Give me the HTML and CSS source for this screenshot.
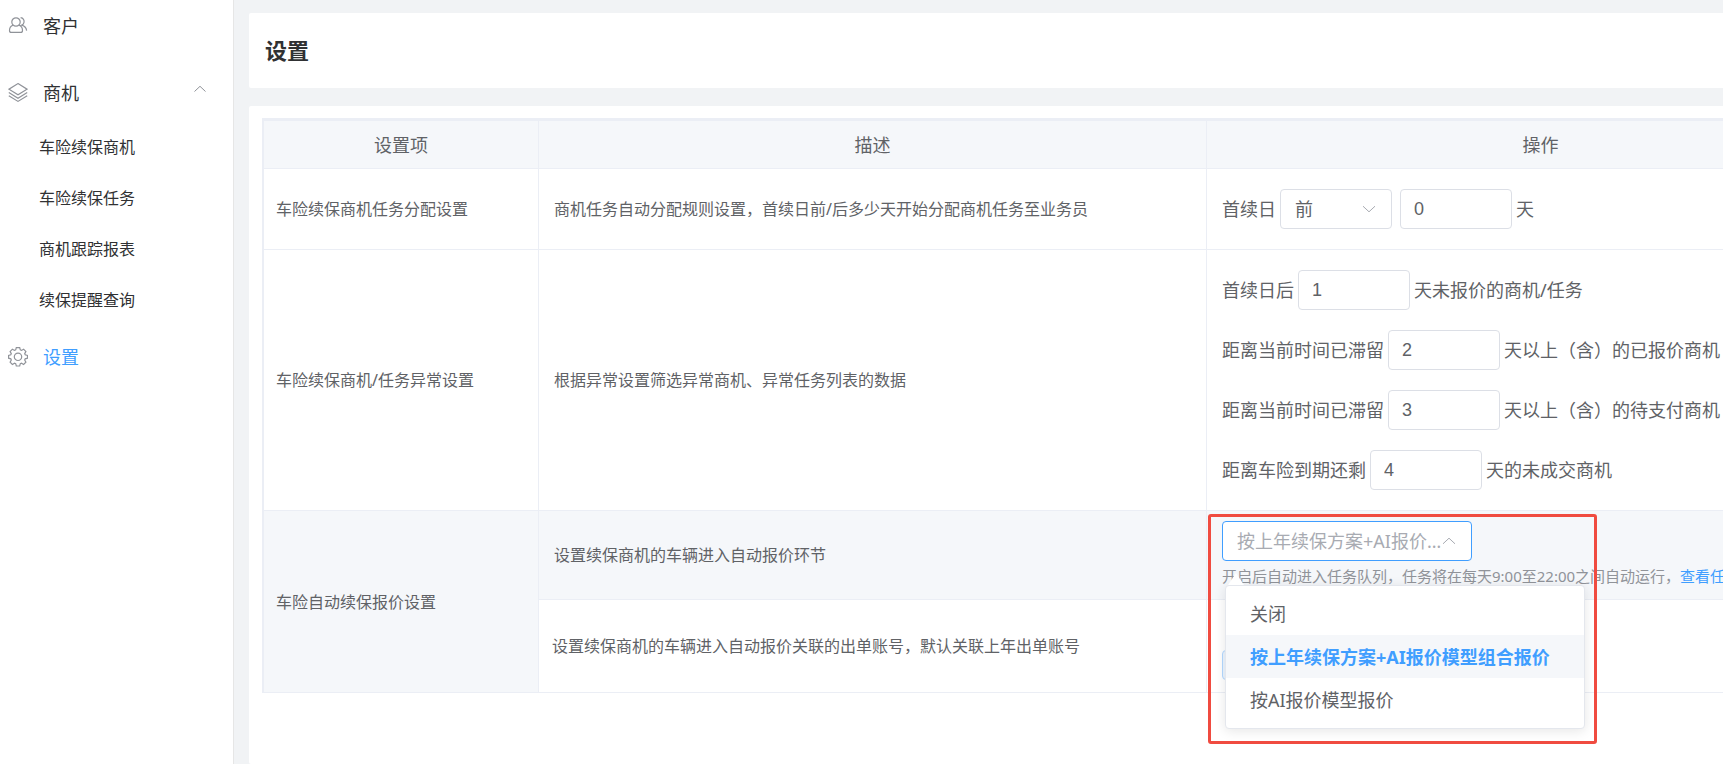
FILE: index.html
```html
<!DOCTYPE html>
<html lang="zh-CN">
<head>
<meta charset="utf-8">
<title>设置</title>
<link rel="stylesheet" href="styles.css">
</head>
<body>
<div class="app">
  <nav class="sidebar" aria-label="主菜单">
    <a class="menu-item" href="#">
      <svg class="menu-icon" viewBox="0 0 20 20"><circle cx="8" cy="6" r="4.2"/><path d="M5 9.200C2.500 10 1.500 12 1.500 14.400c0 1.300.5 2 1.800 2h9.400c1.300 0 1.800-.7 1.800-2 0-2.400-1-4.400-3.500-5.200M12.600 1.700c2.700.3 3.900 2.400 3.400 4.600-.3 1.400-1.100 2.300-2.200 2.800 2.800.9 4.600 2.900 4.800 5.500"/></svg>
      <span>客户</span>
    </a>
    <button class="menu-item menu-group" type="button" aria-expanded="true">
      <svg class="menu-icon" viewBox="0 0 20 20"><path d="M10 .6 19 6.200l-9 5.600L1 6.200zM.8 9.600 10 15.300l9.200-5.700M.8 12.700 10 18.400l9.200-5.700"/></svg>
      <span>商机</span>
      <svg class="menu-arrow" viewBox="0 0 14 8"><path d="M1.500 6.500 7 1.300l5.500 5.200"/></svg>
    </button>
    <div class="submenu">
      <a class="submenu-item" href="#">车险续保商机</a>
      <a class="submenu-item" href="#">车险续保任务</a>
      <a class="submenu-item" href="#">商机跟踪报表</a>
      <a class="submenu-item" href="#">续保提醒查询</a>
    </div>
    <a class="menu-item active" href="#" aria-current="page">
      <svg class="menu-icon" viewBox="0 0 20 20"><path d="M8.300.6h3.400l.6 2.300 1.200.5 2.100-1.200 2.300 2.300-1.200 2.100.5 1.200 2.300.6v2.800l-2.300.6-.5 1.200 1.200 2.100-2.300 2.300-2.100-1.200-1.200.5-.6 2.300H8.300l-.6-2.300-1.200-.5-2.100 1.200-2.300-2.300 1.200-2.100-.5-1.200L.6 11.200V8.400l2.200-.6.5-1.200-1.200-2.100 2.300-2.300 2.100 1.200 1.200-.5z"/><circle cx="10" cy="9.800" r="3.700"/></svg>
      <span>设置</span>
    </a>
  </nav>

  <main class="content">
    <header class="card page-header"><h1 class="page-title">设置</h1></header>
    <section class="card page-body">
      <table class="settings">
        <colgroup><col class="col-name"><col class="col-desc"><col class="col-action"></colgroup>
        <thead>
          <tr><th>设置项</th><th>描述</th><th>操作</th></tr>
        </thead>
        <tbody>
          <tr>
            <td class="name">车险续保商机任务分配设置</td>
            <td class="desc">商机任务自动分配规则设置，首续日前/后多少天开始分配商机任务至业务员</td>
            <td class="action">
              <div class="field">
                <label for="direction">首续日</label>
                <span class="select-box select-small">
                  <select class="control" id="direction"><option>前</option><option>后</option></select>
                  <svg class="caret" viewBox="0 0 14 8"><path d="M1 1.200 7 6.800l6-5.600"/></svg>
                </span>
                <input class="control number spaced" type="text" value="0" aria-label="天数">
                <span>天</span>
              </div>
            </td>
          </tr>
          <tr>
            <td class="name">车险续保商机/任务异常设置</td>
            <td class="desc">根据异常设置筛选异常商机、异常任务列表的数据</td>
            <td class="action">
              <div class="fields">
                <div class="field"><label for="d1">首续日后</label><input class="control number" id="d1" type="text" value="1"><span>天未报价的商机/任务</span></div>
                <div class="field"><label for="d2">距离当前时间已滞留</label><input class="control number" id="d2" type="text" value="2"><span>天以上（含）的已报价商机</span></div>
                <div class="field"><label for="d3">距离当前时间已滞留</label><input class="control number" id="d3" type="text" value="3"><span>天以上（含）的待支付商机</span></div>
                <div class="field"><label for="d4">距离车险到期还剩</label><input class="control number" id="d4" type="text" value="4"><span>天的未成交商机</span></div>
              </div>
            </td>
          </tr>
          <tr class="row-quote">
            <td class="name shaded" rowspan="2">车险自动续保报价设置</td>
            <td class="desc shaded">设置续保商机的车辆进入自动报价环节</td>
            <td class="action compact shaded">
              <div class="quote">
                <span class="select-box select-wide">
                  <select class="control focused" aria-label="报价方式">
                    <option>关闭</option>
                    <option selected>按上年续保方案+AI报价模型组合报价</option>
                    <option>按AI报价模型报价</option>
                  </select>
                  <svg class="caret" viewBox="0 0 14 8"><path d="M1 6.800 7 1.200l6 5.600"/></svg>
                </span>
                <p class="hint">开启后自动进入任务队列，任务将在每天9:00至22:00之间自动运行，<a class="link" href="#">查看任</a></p>
                <div class="dropdown" role="listbox" aria-label="报价方式">
                  <button class="option" type="button" role="option">关闭</button>
                  <button class="option selected" type="button" role="option" aria-selected="true">按上年续保方案+AI报价模型组合报价</button>
                  <button class="option" type="button" role="option">按AI报价模型报价</button>
                </div>
                <div class="highlight"></div>
              </div>
            </td>
          </tr>
          <tr class="row-account">
            <td class="desc desc-account">设置续保商机的车辆进入自动报价关联的出单账号，默认关联上年出单账号</td>
            <td class="action compact"><button class="account" type="button" aria-label="出单账号"></button></td>
          </tr>
        </tbody>
      </table>
    </section>
  </main>
</div>
</body>
</html>
```
FILE: styles.css
```css
* { box-sizing: border-box; }

body {
  margin: 0;
  background: #f1f3f5;
  color: #606266;
  font-family: "Noto Sans", "Noto Sans CJK SC", sans-serif;
  font-size: 18px;
  line-height: 24px;
}

button, select, input { font: inherit; color: inherit; }
svg { fill: none; stroke: #909399; }

.app { display: flex; min-height: 100vh; overflow: hidden; }

.sidebar {
  flex: 0 0 234px;
  background: #fff;
  border-right: 1px solid #e6e6e6;
}
.menu-item {
  display: flex;
  align-items: center;
  gap: 15px;
  width: 100%;
  height: 52px;
  padding: 0 26px 0 8px;
  border: 0;
  background: none;
  color: #303133;
  text-decoration: none;
}
.menu-group { margin-top: 15px; }
.menu-icon { width: 20px; height: 20px; stroke-width: 1.2; }
.menu-arrow { width: 14px; height: 8px; margin: 0 0 8px auto; }
.submenu { display: flex; flex-direction: column; padding: 3px 0 5px; }
.submenu-item {
  padding-left: 39px;
  color: #303133;
  font-size: 16px;
  line-height: 51px;
  text-decoration: none;
}
.active { color: #409eff; }

.content {
  flex: 1;
  min-width: 0;
  display: flex;
  flex-direction: column;
  gap: 18px;
  padding: 13px 0 0 15px;
}
.card { background: #fff; border-radius: 2px 0 0 2px; }
.page-header { padding: 22px 16px 23px; }
.page-title { margin: 0; color: #303133; font-size: 22px; line-height: 30px; }
.page-body { flex: 1; padding: 12px 13px; }

.settings {
  width: 100%;
  min-width: 1613px;
  table-layout: fixed;
  border-collapse: separate;
  border-spacing: 0;
  border-top: 3px solid #ebeef5;
  border-left: 2px solid #ebeef5;
}
.col-name { width: 275px; }
.col-desc { width: 668px; }
.settings th, .settings td {
  padding: 0;
  border-right: 1px solid #ebeef5;
  border-bottom: 1px solid #ebeef5;
  text-align: left;
}
.settings th {
  height: 48px;
  background: #f5f7fa;
  font-weight: 400;
  text-align: center;
}
.settings .name { padding-left: 12px; font-size: 16px; }
.settings .desc { padding-left: 15px; font-size: 16px; }
.settings .desc-account { padding-left: 13px; }
.settings .action { padding: 20px 15px; white-space: nowrap; }
.settings .compact { padding: 10px 15px; }
.settings .shaded { background: #f5f7fa; }
.row-account { height: 93px; }

.fields { display: flex; flex-direction: column; gap: 20px; }
.field { display: flex; align-items: center; gap: 4px; }
.control {
  height: 40px;
  padding: 0 14px;
  border: 1px solid #dcdfe6;
  border-radius: 4px;
  background: #fff;
  outline: 0;
}
.number {
  width: 112px;
  padding: 0 13px;
  font-family: "Liberation Sans", "Noto Sans CJK SC", sans-serif;
}
.spaced { margin-left: 4px; }
.select-box { display: grid; align-items: center; }
.select-box .control { grid-area: 1 / 1; width: 100%; appearance: none; }
.caret {
  grid-area: 1 / 1;
  justify-self: end;
  width: 14px;
  height: 8px;
  margin-right: 16px;
  stroke: #a8abb2;
  pointer-events: none;
}
.select-small { width: 112px; }
.select-wide { width: 250px; }
.select-wide .control { padding-right: 24px; text-overflow: ellipsis; }
.select-box .focused { border-color: #409eff; color: #a8abb2; }

.quote { position: relative; }
.hint { margin: 3px 0 1px; color: #909399; font-size: 15px; }
.link { color: #409eff; text-decoration: none; }

.dropdown {
  position: absolute;
  z-index: 2;
  top: 64px;
  left: 3px;
  width: 360px;
  padding: 6px 0 7px;
  border: 1px solid #e4e7ed;
  border-radius: 4px;
  background: #fff;
  box-shadow: 0 2px 12px rgba(0, 0, 0, 0.1);
}
.dropdown::before {
  content: "";
  position: absolute;
  top: -13px;
  left: 2px;
  border: 8px solid transparent;
  border-top-width: 0;
  border-bottom: 12px solid #fff;
}
.option {
  display: block;
  width: 100%;
  height: 43px;
  padding: 0 24px;
  border: 0;
  background: none;
  text-align: left;
}
.selected { background: #f5f7fa; color: #409eff; font-weight: 700; }

.highlight {
  position: absolute;
  z-index: 3;
  top: -7px;
  left: -14px;
  width: 389px;
  height: 230px;
  border: 3px solid #f04b40;
  border-radius: 3px;
  pointer-events: none;
}
.account {
  display: block;
  width: 120px;
  height: 30px;
  margin-top: 38px;
  border: 1px solid #b3d8ff;
  border-radius: 4px;
  background: #ecf5ff;
}
```
